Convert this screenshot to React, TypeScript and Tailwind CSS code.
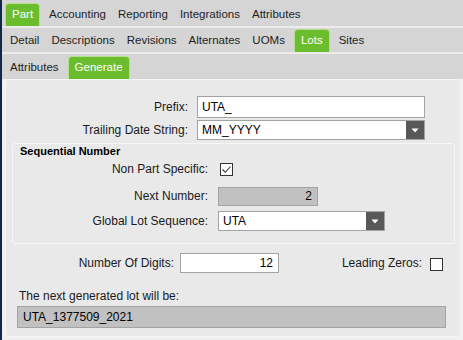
import React from 'react'

const font = { fontFamily: '"Liberation Sans", Arial, sans-serif' }

function Tab({ label, active }: { label: string; active?: boolean }) {
  if (active) {
    return (
      <div className="mx-[3px] first:ml-0 flex h-[23px] items-center rounded-t-[4px] border border-b-0 border-[#b6e08f] bg-[#6bbd2e] px-[6px] text-white">
        {label}
      </div>
    )
  }
  return <div className="flex h-[23px] items-center px-[6px] first:pl-[5px] text-[#1e1e1e]">{label}</div>
}

function TabRow({ tabs, active, h }: { tabs: string[]; active: string; h: string }) {
  return (
    <div className={`flex items-end border-b-2 border-[#ececec] bg-[#d5d5d5] pl-[3px] text-[11.5px] ${h}`}>
      {tabs.map(t => (
        <Tab key={t} label={t} active={t === active} />
      ))}
    </div>
  )
}

function Arrow() {
  return (
    <div className="flex w-[18px] items-center justify-center bg-[#585858]">
      <svg width="8" height="5" viewBox="0 0 8 5">
        <path d="M0.5 0.5h7L4 4.5z" fill="#fff" />
      </svg>
    </div>
  )
}

function Select({ value, w }: { value: string; w: string }) {
  return (
    <div className={`flex h-[20px] border border-[#a3a3a3] bg-white ${w}`}>
      <div className="flex flex-1 items-center pl-[4px] text-[12px] text-black">{value}</div>
      <Arrow />
    </div>
  )
}

function Check({ checked }: { checked?: boolean }) {
  return (
    <div className="flex h-[13px] w-[13px] items-center justify-center border border-[#333] bg-white">
      {checked && (
        <svg width="11" height="11" viewBox="0 0 11 11">
          <path d="M1.5 5.5l2.8 2.8L9.5 2.5" fill="none" stroke="#333" strokeWidth="1.1" />
        </svg>
      )}
    </div>
  )
}

export default function App() {
  return (
    <div className="flex h-[340px] w-[463px] overflow-hidden bg-[#f0f0f0] text-[12px] text-[#1a1a22]" style={font}>
      <div className="w-[2px] bg-[#0e2a48]" />
      <div className="flex flex-1 flex-col">
        <TabRow h="h-[28px]" active="Part" tabs={['Part', 'Accounting', 'Reporting', 'Integrations', 'Attributes']} />
        <TabRow
          h="h-[26px]"
          active="Lots"
          tabs={['Detail', 'Descriptions', 'Revisions', 'Alternates', 'UOMs', 'Lots', 'Sites']}
        />
        <div className="flex h-[25px] items-end bg-[#d5d5d5] pl-[3px] text-[11.5px]">
          <Tab label="Attributes" />
          <Tab label="Generate" active />
        </div>

        <div className="ml-[3px] flex h-[258px] w-[456px] flex-col rounded-[3px] border border-[#f6f6f6] bg-[#e9e9e9]">
          <div className="mt-[16px] flex items-center">
            <div className="w-[182px] text-right">Prefix:</div>
            <div className="ml-[9px] flex h-[22px] w-[228px] items-center border border-[#a3a3a3] bg-white pl-[4px] text-black">
              UTA_
            </div>
          </div>
          <div className="mt-[2px] flex items-center">
            <div className="w-[182px] text-right">Trailing Date String:</div>
            <div className="ml-[9px]">
              <Select value="MM_YYYY" w="w-[228px]" />
            </div>
          </div>

          <div className="ml-[6px] mt-[3px] flex h-[101px] w-[443px] flex-col rounded-[3px] border border-[#f6f6f6]">
            <div className="pl-[7px] text-[11px] font-bold leading-[14px] text-black">Sequential Number</div>
            <div className="mt-[1px] flex h-[20px] items-center">
              <div className="w-[195px] text-right">Non Part Specific:</div>
              <div className="ml-[12px]">
                <Check checked />
              </div>
            </div>
            <div className="mt-[7px] flex h-[20px] items-center">
              <div className="w-[195px] text-right">Next Number:</div>
              <div className="ml-[10px] flex h-[19px] w-[100px] items-center justify-end border border-[#a3a3a3] bg-[#c1c1c1] pr-[5px] text-black">
                2
              </div>
            </div>
            <div className="mt-[5px] flex h-[20px] items-center">
              <div className="w-[195px] text-right">Global Lot Sequence:</div>
              <div className="ml-[10px]">
                <Select value="UTA" w="w-[167px]" />
              </div>
            </div>
          </div>

          <div className="mt-[9px] flex items-center">
            <div className="w-[168px] text-right">Number Of Digits:</div>
            <div className="ml-[6px] flex h-[20px] w-[99px] items-center justify-end border border-[#a3a3a3] bg-white pr-[5px] text-black">
              12
            </div>
            <div className="ml-auto mr-[17px] flex items-center">
              <span>Leading Zeros:</span>
              <div className="ml-[8px] mt-[3px]">
                <Check />
              </div>
            </div>
          </div>

          <div className="ml-[13px] mt-[16px] leading-[14px]">The next generated lot will be:</div>
          <div className="ml-[11px] mt-[3px] flex h-[22px] w-[429px] items-center border border-[#a3a3a3] bg-[#c1c1c1] pl-[5px] text-black">
            UTA_1377509_2021
          </div>
        </div>
      </div>
    </div>
  )
}
